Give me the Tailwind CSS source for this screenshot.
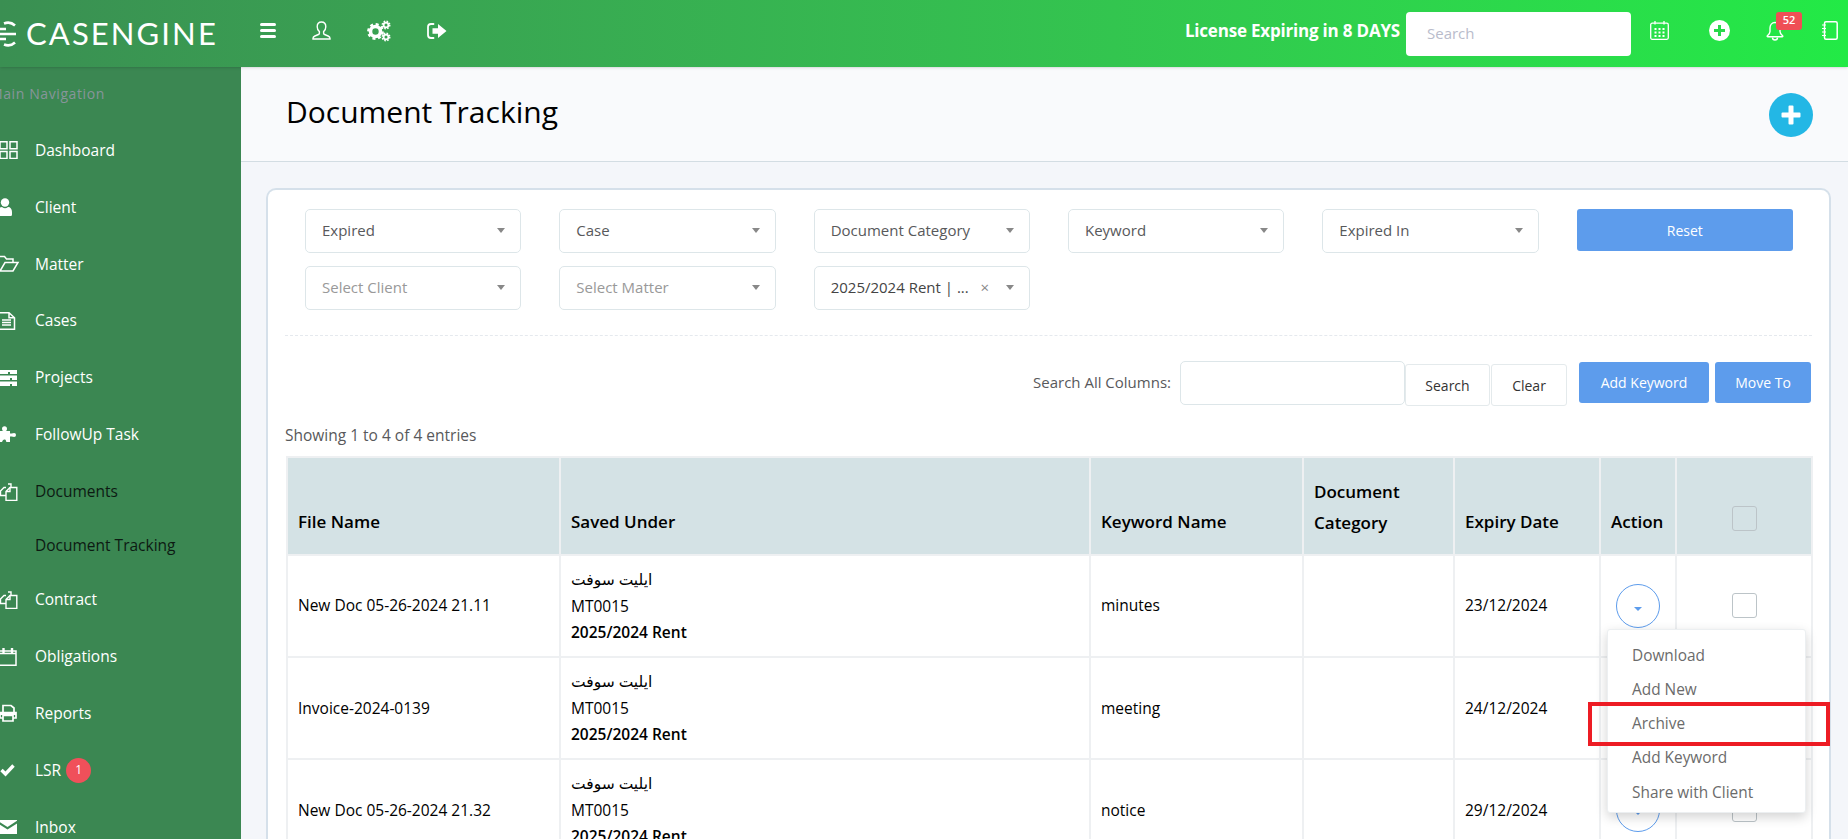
<!DOCTYPE html>
<html lang="en">
<head>
    <meta charset="UTF-8">
    <title>Document Tracking</title>
    <script src="https://cdn.jsdelivr.net/npm/@tailwindcss/browser@4"></script>
</head>
<body class="relative w-[1848px] h-[839px] overflow-hidden bg-[#f4f6fa] font-['Open_Sans','DejaVu_Sans',sans-serif] text-[15px] text-[#58595b]">

    <!-- Top bar -->
    <header class="relative z-10 flex items-center h-[67px] bg-linear-to-r from-[#3a8f52] to-[#22ea46] shadow-sm text-white">
        <div class="flex items-center w-[260px] h-full overflow-hidden">
            <svg class="w-[16px] h-[26px] shrink-0" viewBox="0 0 16 26" fill="none" stroke="white" stroke-width="2.6">
                <path d="M15 4.5A10.5 10.5 0 0 0 4 2.5M15 21.5A10.5 10.5 0 0 1 4 23.5M0 8H6M0 13H16M0 18H6"/>
            </svg>
            <span class="ml-[10px] font-['Lato',sans-serif] text-[31px] leading-none tracking-[2.1px] font-normal">CASENGINE</span>
        </div>
        <button class="w-[16px] flex flex-col gap-[3px] -mt-[6px]">
            <span class="h-[3px] bg-white rounded-sm"></span>
            <span class="h-[3px] bg-white rounded-sm"></span>
            <span class="h-[3px] bg-white rounded-sm"></span>
        </button>
        <svg class="ml-[36px] -mt-[6px] w-[19px] h-[19px]" viewBox="0 0 19 19" fill="none" stroke="white" stroke-width="1.4">
            <path d="M9.5 1C6.8 1 5.2 3 5.2 5.8c0 2 .9 3.8 2.2 4.8v1.6c0 .6-.3 1-1 1.3l-3.5 1.5C1.6 15.6 1 16.3 1 17.3V18h17v-.7c0-1-.6-1.7-1.9-2.3l-3.5-1.5c-.7-.3-1-.7-1-1.3v-1.6c1.3-1 2.2-2.8 2.2-4.8C13.8 3 12.2 1 9.5 1z"/>
        </svg>
        <svg class="ml-[36px] -mt-[6px] w-[24px] h-[22px]" viewBox="0 0 24 22" fill="none" stroke="white">
            <circle cx="8.5" cy="11.5" r="5" stroke-width="3.6"/>
            <circle cx="8.5" cy="11.5" r="7.2" stroke-width="2.4" stroke-dasharray="3 2.65"/>
            <circle cx="19" cy="5" r="2.4" stroke-width="1.8"/>
            <circle cx="19" cy="5" r="3.8" stroke-width="1.4" stroke-dasharray="1.6 1.4"/>
            <circle cx="19" cy="17" r="2.4" stroke-width="1.8"/>
            <circle cx="19" cy="17" r="3.8" stroke-width="1.4" stroke-dasharray="1.6 1.4"/>
        </svg>
        <svg class="ml-[36px] -mt-[6px] w-[20px] h-[16px]" viewBox="0 0 20 16" fill="white">
            <path d="M6.5 1H4a3 3 0 0 0-3 3v8a3 3 0 0 0 3 3h2.5" fill="none" stroke="white" stroke-width="1.8" stroke-linecap="round"/>
            <path d="M5.5 5.2H11V1l8.5 7L11 15v-4.2H5.5z"/>
        </svg>

        <div class="ml-auto flex items-center h-full">
            <span class="font-bold text-[17px] tracking-[-0.2px] -mt-[6px] mr-[6px]">License Expiring in 8 DAYS</span>
            <div class="flex items-center w-[225px] h-[44px] bg-white rounded-[4px] pl-[21px] text-[#b9bccb] text-[15px]">Search</div>
            <svg class="ml-[19px] -mt-[6px] w-[19px] h-[19px]" viewBox="0 0 19 19" fill="none" stroke="white" stroke-width="1.3">
                <rect x=".7" y="2.2" width="17.6" height="16.1" rx="1.5"/>
                <path d="M5 0v3.5M14 0v3.5" />
                <path d="M4.5 7h2v2h-2zM8.5 7h2v2h-2zM12.5 7h2v2h-2zM4.5 10.5h2v2h-2zM8.5 10.5h2v2h-2zM12.5 10.5h2v2h-2zM4.5 14h2v2h-2zM8.5 14h2v2h-2zM12.5 14h2v2h-2z" fill="white" stroke="none"/>
            </svg>
            <svg class="ml-[40px] -mt-[6px] w-[21px] h-[21px]" viewBox="0 0 21 21">
                <circle cx="10.5" cy="10.5" r="10.5" fill="white"/>
                <path d="M9 5h3v4h4v3h-4v4H9v-4H5V9h4z" fill="#28d94a"/>
            </svg>
            <div class="relative ml-[36px] -mt-[6px] w-[18px] h-[20px]">
                <svg class="w-[18px] h-[20px]" viewBox="0 0 18 20" fill="none" stroke="white" stroke-width="1.4">
                    <path d="M9 1.5C5.8 1.5 4 4 4 7v3.5c0 1.6-1 3-2.6 4.3-.4.4-.2 1 .4 1h14.4c.6 0 .8-.6.4-1C15 13.5 14 12.1 14 10.5V7c0-3-1.8-5.5-5-5.5z"/>
                    <path d="M6.5 16.5a2.5 2.5 0 0 0 5 0"/>
                </svg>
                <span class="absolute left-[10px] -top-[9px] flex items-center justify-center w-[26px] h-[18px] rounded-[3px] bg-[#ef4f55] text-white text-[11px] font-semibold">52</span>
            </div>
            <svg class="ml-[38px] mr-[10px] -mt-[6px] w-[16px] h-[19px]" viewBox="0 0 16 19" fill="none" stroke="white" stroke-width="1.5">
                <rect x="2.5" y=".8" width="12.7" height="17.4" rx="1.5"/>
                <path d="M0 4h4M0 7.5h4M0 11h4M0 14.5h4" stroke-width="1.2"/>
            </svg>
        </div>
    </header>

    <div class="flex h-[772px]">
        <!-- Sidebar -->
        <aside class="w-[241px] shrink-0 bg-[#3b8752] overflow-hidden text-white text-[15.5px]">
            <p class="h-[55px] pt-[16px] -ml-[10px] text-[14px] font-medium tracking-[0.6px] text-[#87959a]">Main Navigation</p>
            <nav>
                <a class="flex items-center h-[56.9px]">
                    <svg class="w-[35px] h-[18px] shrink-0" viewBox="0 0 35 18" fill="none" stroke="white" stroke-width="1.5"><path d="M0 .8h7v7H0zM10 .8h7v7h-7zM0 10.5h7v7H0zM10 10.5h7v7h-7z"/></svg>
                    Dashboard
                </a>
                <a class="flex items-center h-[56.9px]">
                    <svg class="w-[35px] h-[18px] shrink-0" viewBox="0 0 35 18" fill="white"><circle cx="5" cy="4.5" r="4.2"/><path d="M-2 18v-4c0-3 1.5-5 4-5 1 .8 2 1.2 3 1.2S7 9.8 8 9c2.5 0 4 2 4 5v2.5c0 1-.7 1.5-1.5 1.5z"/></svg>
                    Client
                </a>
                <a class="flex items-center h-[56.9px]">
                    <svg class="w-[35px] h-[18px] shrink-0" viewBox="0 0 35 18" fill="none" stroke="white" stroke-width="1.5"><path d="M-1 1.5h5.5l2 2.5h6.5v3M0 16h13l5-8.5H5L0 16z"/></svg>
                    Matter
                </a>
                <a class="flex items-center h-[56.9px]">
                    <svg class="w-[35px] h-[18px] shrink-0" viewBox="0 0 35 18" fill="none" stroke="white" stroke-width="1.5"><path d="M-1 .8h10l5.5 5v11.4H-1zM9 .8v5h5.5"/><path d="M2 8h9M2 10.5h9M2 13h9" stroke-width="1.6"/></svg>
                    Cases
                </a>
                <a class="flex items-center h-[56.9px]">
                    <svg class="w-[35px] h-[18px] shrink-0" viewBox="0 0 35 18" fill="white"><path d="M0 1h17v4H10V3H8v2H0zM0 6.5h17V11H12V9h-2v2H0zM0 12.5h17V17H12v-2h-2v2H0z"/></svg>
                    Projects
                </a>
                <a class="flex items-center h-[56.9px]">
                    <svg class="w-[35px] h-[18px] shrink-0" viewBox="0 0 35 18" fill="white"><circle cx="4.5" cy="2.8" r="2.5"/><circle cx="14" cy="9" r="2"/><path d="M-1 5h11v2.5h3v3h-3V16H6.5c-1-.8 0-2-1.5-2.500S2.500 14.500 2 16H-1z"/></svg>
                    FollowUp Task
                </a>
                <a class="flex items-center h-[56.9px] text-[#0d1a12]">
                    <svg class="w-[35px] h-[18px] shrink-0" viewBox="0 0 35 18" fill="none" stroke="white" stroke-width="1.4"><path d="M6 4.5H4L.5 8v4.5H6M8 1h3v4"/><path d="M6 8.5L10 4.5h6.8v13H6z"/><path d="M10 4.5v4H6"/></svg>
                    Documents
                </a>
                <a class="flex items-center h-[51px] pl-[35px] text-[#0d1a12]">Document Tracking</a>
                <a class="flex items-center h-[56.9px]">
                    <svg class="w-[35px] h-[18px] shrink-0" viewBox="0 0 35 18" fill="none" stroke="white" stroke-width="1.4"><path d="M6 4.5H4L.5 8v4.5H6M8 1h3v4"/><path d="M6 8.5L10 4.5h6.8v13H6z"/><path d="M10 4.5v4H6"/></svg>
                    Contract
                </a>
                <a class="flex items-center h-[56.9px]">
                    <svg class="w-[35px] h-[18px] shrink-0" viewBox="0 0 35 18" fill="none" stroke="white" stroke-width="1.5"><path d="M-1 3h17v14.2H-1zM-1 5.5h17" /><path d="M3.5 .5v4M12 .5v4" stroke-width="2.4" stroke-linecap="round"/></svg>
                    Obligations
                </a>
                <a class="flex items-center h-[56.9px]">
                    <svg class="w-[35px] h-[18px] shrink-0" viewBox="0 0 35 18" fill="none" stroke="white" stroke-width="1.7"><path d="M3 8V1.5h8l3 2.5v4M3 14H0V8.5h16V14h-3M3 11.5h10V17H3z"/><path d="M0 9h16v2H0z" fill="white" stroke="none"/></svg>
                    Reports
                </a>
                <a class="flex items-center h-[56.9px]">
                    <svg class="w-[35px] h-[18px] shrink-0" viewBox="0 0 35 18" fill="none" stroke="white" stroke-width="3.4"><path d="M1.5 9l4 4 8-8.5"/></svg>
                    LSR
                    <span class="ml-[5px] flex items-center justify-center w-[25px] h-[25px] rounded-full bg-[#f0505a] text-[12px]">1</span>
                </a>
                <a class="flex items-center h-[56.9px]">
                    <svg class="w-[35px] h-[18px] shrink-0" viewBox="0 0 35 18" fill="white"><path d="M-2 2h19v.8L7.5 9-2 3zM-2 5.5L7.5 11.5 17 5.5V16H-2z"/></svg>
                    Inbox
                </a>
            </nav>
        </aside>

        <main class="flex-1 min-w-0">
            <!-- Page title -->
            <div class="flex items-center justify-between h-[95px] pl-[45px] pr-[35px] bg-[#f9fafc] border-b border-[#d3dde3]">
                <h1 class="text-[30px] leading-none text-black -mt-[5px]">Document Tracking</h1>
                <button class="mt-[1px] flex items-center justify-center w-[44px] h-[44px] rounded-full bg-[#23b7e5]">
                    <svg class="w-[20px] h-[20px]" viewBox="0 0 20 20" fill="white"><path d="M7.5 1.5a1 1 0 0 1 1-1h3a1 1 0 0 1 1 1v6h6a1 1 0 0 1 1 1v3a1 1 0 0 1-1 1h-6v6a1 1 0 0 1-1 1h-3a1 1 0 0 1-1-1v-6h-6a1 1 0 0 1-1-1v-3a1 1 0 0 1 1-1h6z"/></svg>
                </button>
            </div>

            <!-- Card -->
            <section class="ml-[25px] mr-[17px] mt-[26px] h-[651px] overflow-hidden bg-white border-2 border-b-0 border-[#d5e0ea] rounded-t-[10px] px-[17px] pt-[19px]">
                <div class="grid grid-cols-6 gap-x-[38px] gap-y-[13px] pl-[20px] pr-[19px] pb-[25px] border-b border-dashed border-[#e5e9ee]">
                    <div class="flex items-center justify-between h-[44px] pl-[16px] pr-[15px] pb-[2px] bg-white border border-[#dde6e9] rounded-[5px]">Expired<i class="border-x-[4px] border-t-[5px] border-x-transparent border-t-[#888]"></i></div>
                    <div class="flex items-center justify-between h-[44px] pl-[16px] pr-[15px] pb-[2px] bg-white border border-[#dde6e9] rounded-[5px]">Case<i class="border-x-[4px] border-t-[5px] border-x-transparent border-t-[#888]"></i></div>
                    <div class="flex items-center justify-between h-[44px] pl-[16px] pr-[15px] pb-[2px] bg-white border border-[#dde6e9] rounded-[5px]">Document Category<i class="border-x-[4px] border-t-[5px] border-x-transparent border-t-[#888]"></i></div>
                    <div class="flex items-center justify-between h-[44px] pl-[16px] pr-[15px] pb-[2px] bg-white border border-[#dde6e9] rounded-[5px]">Keyword<i class="border-x-[4px] border-t-[5px] border-x-transparent border-t-[#888]"></i></div>
                    <div class="flex items-center justify-between h-[44px] pl-[16px] pr-[15px] pb-[2px] bg-white border border-[#dde6e9] rounded-[5px]">Expired In<i class="border-x-[4px] border-t-[5px] border-x-transparent border-t-[#888]"></i></div>
                    <button class="h-[42px] rounded-[3px] bg-[#5d9cec] text-white text-[14px] font-medium">Reset</button>
                    <div class="flex items-center justify-between h-[44px] pl-[16px] pr-[15px] pb-[2px] bg-white border border-[#dde6e9] rounded-[5px] text-[#999]">Select Client<i class="border-x-[4px] border-t-[5px] border-x-transparent border-t-[#888]"></i></div>
                    <div class="flex items-center justify-between h-[44px] pl-[16px] pr-[15px] pb-[2px] bg-white border border-[#dde6e9] rounded-[5px] text-[#999]">Select Matter<i class="border-x-[4px] border-t-[5px] border-x-transparent border-t-[#888]"></i></div>
                    <div class="flex items-center h-[44px] pl-[16px] pr-[15px] pb-[2px] bg-white border border-[#dde6e9] rounded-[5px] text-[#444]">2025/2024 Rent | ...<span class="ml-auto text-[#888] text-[15px]">×</span><i class="ml-[17px] border-x-[4px] border-t-[5px] border-x-transparent border-t-[#888]"></i></div>
                </div>

                <!-- Search row -->
                <div class="flex items-start justify-end mt-[25px] pr-[1px] h-[44px]">
                    <span class="mt-[10px] mr-[9px]">Search All Columns:</span>
                    <div class="w-[225px] h-[44px] border border-[#dde6e9] rounded-[5px]"></div>
                    <button class="mt-[3px] w-[85px] h-[42px] border border-[#e4eaec] rounded-[3px] text-[14px] text-[#333] font-medium">Search</button>
                    <button class="mt-[3px] ml-[1px] mr-[12px] w-[76px] h-[42px] border border-[#e4eaec] rounded-[3px] text-[14px] text-[#333] font-medium">Clear</button>
                    <button class="mt-[1px] w-[130px] h-[41px] rounded-[3px] bg-[#5d9cec] text-white text-[14px] font-medium">Add Keyword</button>
                    <button class="mt-[1px] ml-[6px] w-[96px] h-[41px] rounded-[3px] bg-[#5d9cec] text-white text-[14px] font-medium">Move To</button>
                </div>

                <p class="mt-[20px] leading-[20px] text-[15.5px]">Showing 1 to 4 of 4 entries</p>

                <!-- Table -->
                <table class="mt-[11px] ml-[1px] w-[1525px] table-fixed border-collapse text-[15.5px] text-black">
                    <colgroup>
                        <col class="w-[273px]"><col class="w-[530px]"><col class="w-[213px]"><col class="w-[151px]"><col class="w-[146px]"><col class="w-[76px]"><col class="w-[136px]">
                    </colgroup>
                    <thead class="bg-[#d4e2e5] text-[17px] text-left align-bottom">
                        <tr class="h-[98px]">
                            <th class="border-2 border-[#eef0f2] px-[10px] pb-[20px] font-semibold">File Name</th>
                            <th class="border-2 border-[#eef0f2] px-[10px] pb-[20px] font-semibold">Saved Under</th>
                            <th class="border-2 border-[#eef0f2] px-[10px] pb-[20px] font-semibold">Keyword Name</th>
                            <th class="border-2 border-[#eef0f2] px-[10px] pb-[16px] font-semibold leading-[31px]">Document<br>Category</th>
                            <th class="border-2 border-[#eef0f2] px-[10px] pb-[20px] font-semibold">Expiry Date</th>
                            <th class="border-2 border-[#eef0f2] px-[10px] pb-[20px] font-semibold">Action</th>
                            <th class="border-2 border-[#eef0f2] pb-[23px]"><div class="mx-auto w-[25px] h-[25px] border border-[#bcc4c8] rounded-[3px]"></div></th>
                        </tr>
                    </thead>
                    <tbody class="leading-[26.5px]">
                        <tr class="h-[102px]">
                            <td class="border-2 border-[#eef0f2] px-[10px] pb-[1px]">New Doc 05-26-2024 21.11</td>
                            <td class="border-2 border-[#eef0f2] px-[10px]"><span dir="rtl" class="block text-left">ايليت سوفت</span>MT0015<br><b class="font-semibold">2025/2024 Rent</b></td>
                            <td class="border-2 border-[#eef0f2] px-[10px] pb-[1px]">minutes</td>
                            <td class="border-2 border-[#eef0f2]"></td>
                            <td class="border-2 border-[#eef0f2] px-[10px] pb-[1px]">23/12/2024</td>
                            <td class="border-2 border-[#eef0f2]"><div class="mx-auto flex items-center justify-center w-[44px] h-[44px] border border-[#5d9cec] rounded-full"><i class="mt-[6px] border-x-[4px] border-t-[4px] border-x-transparent border-t-[#5d9cec]"></i></div></td>
                            <td class="border-2 border-[#eef0f2]"><div class="mx-auto -mt-[2px] w-[25px] h-[25px] border border-[#bcc4c8] rounded-[3px]"></div></td>
                        </tr>
                        <tr class="h-[102px]">
                            <td class="border-2 border-[#eef0f2] px-[10px]">Invoice-2024-0139</td>
                            <td class="border-2 border-[#eef0f2] px-[10px]"><span dir="rtl" class="block text-left">ايليت سوفت</span>MT0015<br><b class="font-semibold">2025/2024 Rent</b></td>
                            <td class="border-2 border-[#eef0f2] px-[10px]">meeting</td>
                            <td class="border-2 border-[#eef0f2]"></td>
                            <td class="border-2 border-[#eef0f2] px-[10px]">24/12/2024</td>
                            <td class="border-2 border-[#eef0f2]"><div class="mx-auto flex items-center justify-center w-[44px] h-[44px] border border-[#5d9cec] rounded-full"><i class="mt-[6px] border-x-[4px] border-t-[4px] border-x-transparent border-t-[#5d9cec]"></i></div></td>
                            <td class="border-2 border-[#eef0f2]"><div class="mx-auto -mt-[2px] w-[25px] h-[25px] border border-[#bcc4c8] rounded-[3px]"></div></td>
                        </tr>
                        <tr class="h-[102px]">
                            <td class="border-2 border-[#eef0f2] px-[10px]">New Doc 05-26-2024 21.32</td>
                            <td class="border-2 border-[#eef0f2] px-[10px]"><span dir="rtl" class="block text-left">ايليت سوفت</span>MT0015<br><b class="font-semibold">2025/2024 Rent</b></td>
                            <td class="border-2 border-[#eef0f2] px-[10px]">notice</td>
                            <td class="border-2 border-[#eef0f2]"></td>
                            <td class="border-2 border-[#eef0f2] px-[10px]">29/12/2024</td>
                            <td class="border-2 border-[#eef0f2]"><div class="mx-auto flex items-center justify-center w-[44px] h-[44px] border border-[#5d9cec] rounded-full"><i class="mt-[6px] border-x-[4px] border-t-[4px] border-x-transparent border-t-[#5d9cec]"></i></div></td>
                            <td class="border-2 border-[#eef0f2]"><div class="mx-auto -mt-[2px] w-[25px] h-[25px] border border-[#bcc4c8] rounded-[3px]"></div></td>
                        </tr>
                    </tbody>
                </table>
            </section>
        </main>
    </div>

    <!-- Action dropdown -->
    <ul class="absolute z-20 left-[1607px] top-[629px] w-[199px] h-[184px] pt-[8px] bg-white rounded-[3px] border border-[#eceff1] shadow-[0_4px_12px_rgba(0,0,0,0.18)] text-[15.4px] text-[#6b6b6b]">
        <li class="flex items-center h-[34.3px] pl-[24px]">Download</li>
        <li class="flex items-center h-[34.3px] pl-[24px]">Add New</li>
        <li class="flex items-center h-[34.3px] pl-[24px]">Archive</li>
        <li class="flex items-center h-[34.3px] pl-[24px]">Add Keyword</li>
        <li class="flex items-center h-[34.3px] pl-[24px]">Share with Client</li>
    </ul>
    <!-- Red annotation box -->
    <div class="absolute z-30 left-[1588px] top-[702px] w-[242px] h-[44px] border-[4.5px] border-[#ed1c24]"></div>
</body>
</html>
